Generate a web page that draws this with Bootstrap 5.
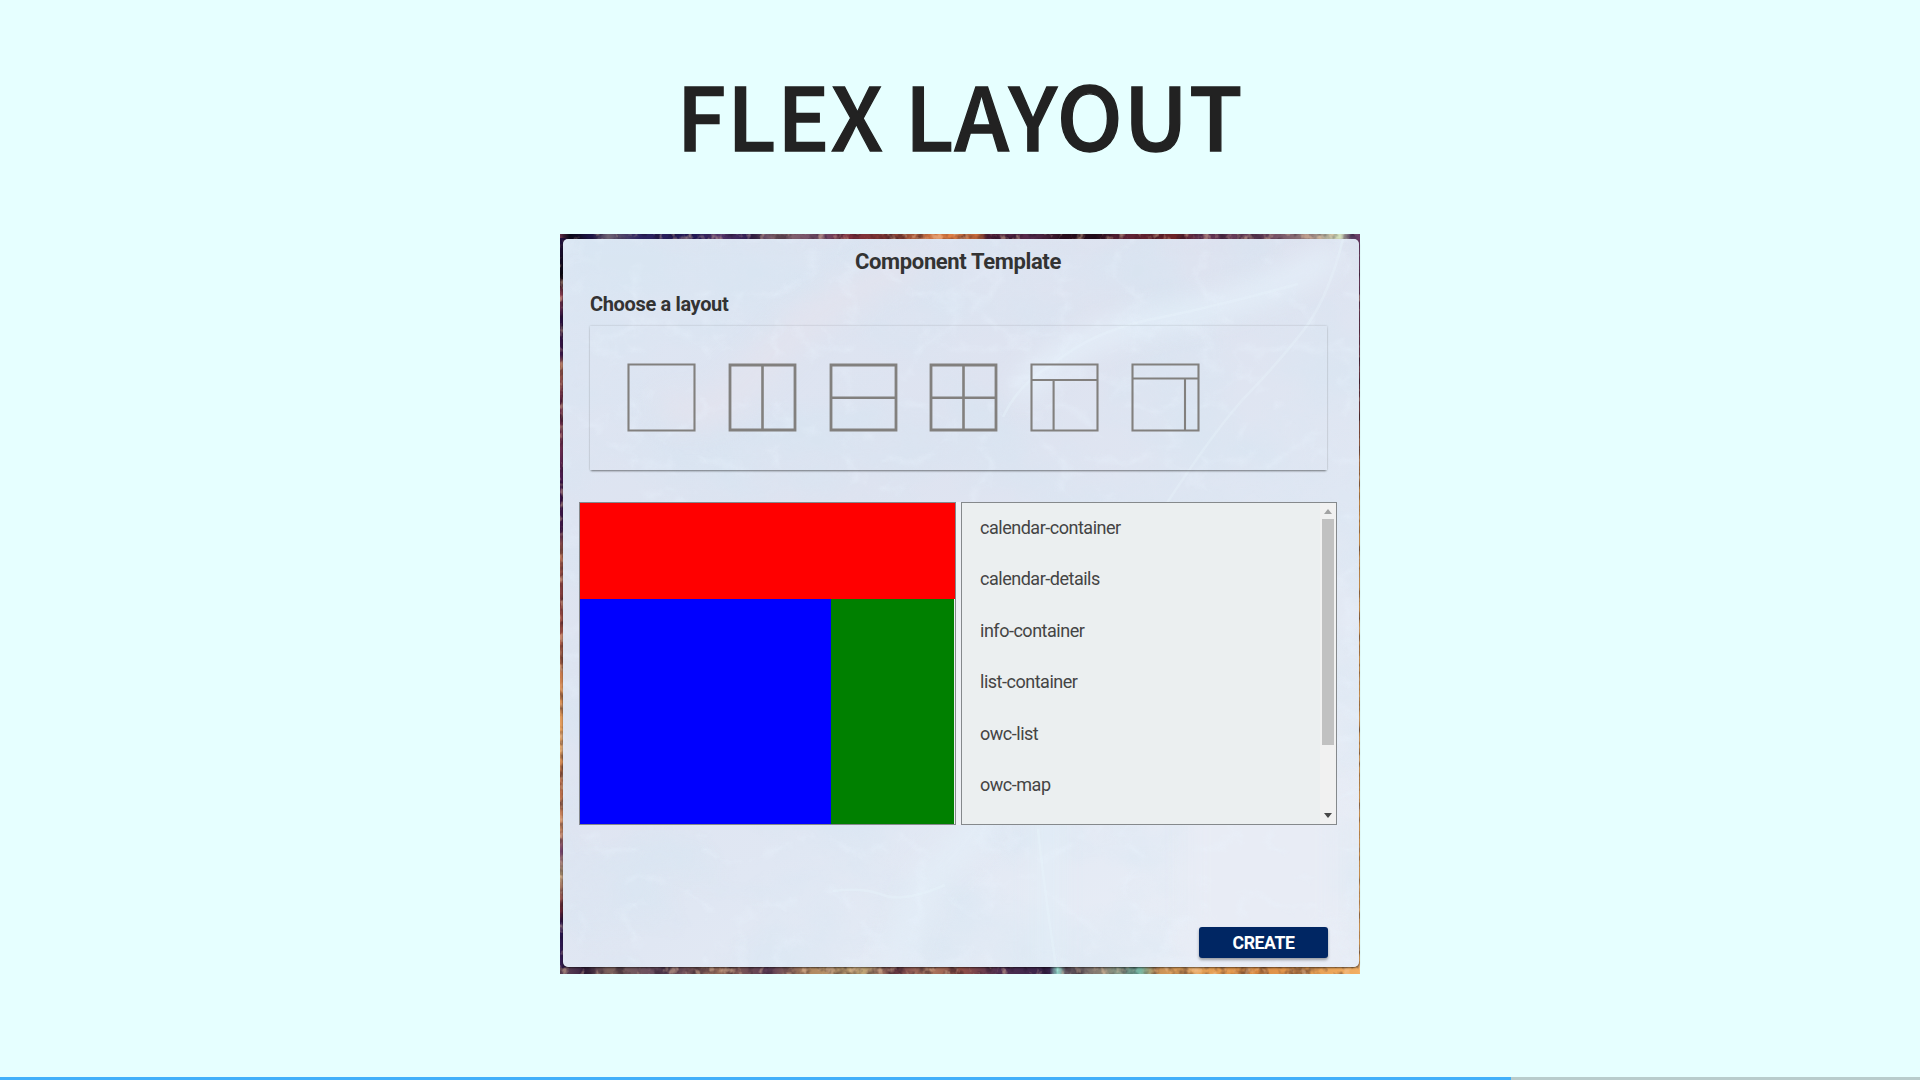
<!DOCTYPE html>
<html lang="en">
<head>
<meta charset="utf-8">
<meta name="viewport" content="width=device-width, initial-scale=1">
<title>Flex layout</title>
<link href="https://cdn.jsdelivr.net/npm/bootstrap@5.3.0/dist/css/bootstrap.min.css" rel="stylesheet">
<style>
  body { background: #e6ffff; height: 1080px; overflow: hidden; font-family: Roboto, "Liberation Sans", sans-serif; color: #333; }
  .slide-title { font-family: "Noto Sans CJK SC", "Noto Sans", sans-serif; font-weight: 500; font-size: 87.5px; line-height: 106px; letter-spacing: 1.1px; -webkit-text-stroke: 1.3px #222; color: #222; margin-top: 60px; height: 174px; }
  .shot { width: 800px; height: 740px; padding: 5px 1px 7px 3px; }
  .satellite { inset: 0; z-index: 0; }
  .dialog-panel { z-index: 1; border-radius: 5px; box-shadow: 0 1px 2px rgba(0,0,0,.55); overflow: hidden; }
  .haze { inset: 0; z-index: -1; }
  .dialog-title { font-size: 22px; font-weight: 700; line-height: 28px; letter-spacing: -.36px; padding-top: 9px; padding-right: 6px; }
  .dialog-sub { font-size: 20px; font-weight: 700; line-height: 26px; letter-spacing: -.35px; margin: 15px 0 0 27px; }
  .picker { width: 737px; height: 144px; margin: 9px 0 0 27px; padding: 37px 0 0 37px; gap: 31.8px; box-shadow: 0 2px 2px -1px rgba(0,0,0,.45), 0 0 2px rgba(0,0,0,.2); }
  .picker svg { width: 69px; height: 69px; flex: none; fill: none; stroke: #82807e; stroke-width: 2.1; }
  .workspace { margin: 32px 21px 0 16px; height: 323px; }
  .pane { border: 1px solid #85898c; background: #ebeff0; width: 377px; }
  .pane-list { width: 376px; }
  .gutter { background: #eef0f5; width: 382px; }
  .zone-top { background: red; height: 96px; }
  .zone-main { background: blue; width: 251px; }
  .zone-side { background: green; width: 123px; }
  .names { padding: 0 0 0 18px; font-size: 18px; letter-spacing: -.48px; color: #444; }
  .names li { height: 51.4px; line-height: 49.4px; }
  .scroller { width: 16px; background: #f1f1f1; padding: 6px 2px 6px 2px; }
  .scroller .thumb { height: 226px; background: #c1c1c1; margin-top: 5px; }
  .scroller svg { width: 8px; height: 5px; }
  .btn-create { width: 129px; height: 31px; margin: 102px 31px 0 auto; background: #002663; color: #fff; font-weight: 700; font-size: 17.6px; letter-spacing: -.4px; line-height: 32px; border-radius: 3px; padding: 0; border: 0; box-shadow: 0 2px 3px rgba(0,0,0,.35); }
  .deck-progress { height: 3px; border-radius: 0; background: #b8cccc; }
  .deck-progress .progress-bar { background: #42affa; }
</style>
<script src="https://cdn.jsdelivr.net/npm/bootstrap@5.3.0/dist/js/bootstrap.bundle.min.js"></script>
</head>
<body class="d-flex flex-column align-items-center">
<h1 class="slide-title mb-0 text-center">FLEX LAYOUT</h1>

<main class="shot position-relative d-flex">
  <!-- satellite photograph behind the dialog -->
  <svg class="satellite position-absolute" width="800" height="740" viewBox="0 0 800 740" aria-hidden="true">
    <defs>
      <linearGradient id="topEdge">
        <stop offset="0" stop-color="#7a3a55"/><stop offset=".012" stop-color="#080818"/><stop offset=".04" stop-color="#1e1548"/><stop offset=".06" stop-color="#6d6172"/><stop offset=".1" stop-color="#2c2360"/><stop offset=".17" stop-color="#211955"/><stop offset=".2" stop-color="#52346a"/><stop offset=".235" stop-color="#321f54"/><stop offset=".27" stop-color="#8a6b70"/><stop offset=".33" stop-color="#6e4868"/><stop offset=".36" stop-color="#7b2d3c"/><stop offset=".41" stop-color="#863a33"/><stop offset=".44" stop-color="#a35639"/><stop offset=".48" stop-color="#e38245"/><stop offset=".525" stop-color="#c76a3c"/><stop offset=".535" stop-color="#54203a"/><stop offset=".59" stop-color="#552b4d"/><stop offset=".63" stop-color="#2a0d1c"/><stop offset=".67" stop-color="#210b19"/><stop offset=".7" stop-color="#5c2338"/><stop offset=".77" stop-color="#6c2326"/><stop offset=".8" stop-color="#5e3050"/><stop offset=".88" stop-color="#6c4560"/><stop offset=".94" stop-color="#96807d"/><stop offset=".975" stop-color="#d5e3be"/><stop offset=".99" stop-color="#6a4a75"/><stop offset="1" stop-color="#70406a"/>
      </linearGradient>
      <linearGradient id="bottomEdge">
        <stop offset="0" stop-color="#644759"/><stop offset=".03" stop-color="#3b2443"/><stop offset=".06" stop-color="#7d625c"/><stop offset=".13" stop-color="#664a60"/><stop offset=".2" stop-color="#8f6756"/><stop offset=".26" stop-color="#5b3b55"/><stop offset=".31" stop-color="#b08760"/><stop offset=".38" stop-color="#bfa475"/><stop offset=".42" stop-color="#77424a"/><stop offset=".46" stop-color="#ad7a61"/><stop offset=".5" stop-color="#945248"/><stop offset=".55" stop-color="#4f2e51"/><stop offset=".612" stop-color="#372349"/><stop offset=".622" stop-color="#9feadb"/><stop offset=".632" stop-color="#675a65"/><stop offset=".68" stop-color="#8d8374"/><stop offset=".725" stop-color="#73b7a4"/><stop offset=".745" stop-color="#c69057"/><stop offset=".79" stop-color="#e8a65b"/><stop offset=".87" stop-color="#dc8d44"/><stop offset=".94" stop-color="#e7a055"/><stop offset="1" stop-color="#f2ae62"/>
      </linearGradient>
      <linearGradient id="leftEdge" x2="0" y2="1">
        <stop offset="0" stop-color="#221040"/><stop offset=".05" stop-color="#08060f"/><stop offset=".08" stop-color="#8b3e52"/><stop offset=".11" stop-color="#2a1140"/><stop offset=".16" stop-color="#3a1748"/><stop offset=".175" stop-color="#ad6950"/><stop offset=".22" stop-color="#5f2540"/><stop offset=".28" stop-color="#71304e"/><stop offset=".34" stop-color="#421651"/><stop offset=".4" stop-color="#3b1644"/><stop offset=".43" stop-color="#b56a50"/><stop offset=".48" stop-color="#843d3e"/><stop offset=".54" stop-color="#a35145"/><stop offset=".62" stop-color="#d98d53"/><stop offset=".7" stop-color="#efab66"/><stop offset=".74" stop-color="#b1603e"/><stop offset=".81" stop-color="#d08f68"/><stop offset=".84" stop-color="#70406a"/><stop offset=".87" stop-color="#bca27c"/><stop offset=".92" stop-color="#7d2d3a"/><stop offset=".94" stop-color="#261350"/><stop offset="1" stop-color="#382054"/>
      </linearGradient>
      <linearGradient id="rightEdge" x2="0" y2="1">
        <stop offset="0" stop-color="#6f406a"/><stop offset=".22" stop-color="#6c3440"/><stop offset=".35" stop-color="#dc9b52"/><stop offset="1" stop-color="#e7a75e"/>
      </linearGradient>
      <filter id="grain" x="0" y="0" width="100%" height="100%" color-interpolation-filters="sRGB">
        <feTurbulence type="fractalNoise" baseFrequency=".09 .09" numOctaves="3" seed="8"/>
        <feColorMatrix values="0 0 0 0 .08  0 0 0 0 .03  0 0 0 0 .1  3.4 0 0 0 -1.5"/>
      </filter>
      <filter id="sparks" x="0" y="0" width="100%" height="100%" color-interpolation-filters="sRGB">
        <feTurbulence type="fractalNoise" baseFrequency=".12 .1" numOctaves="3" seed="31"/>
        <feColorMatrix values="0 0 0 0 .96  0 0 0 0 .8  0 0 0 0 .66  0 4 0 0 -2.1"/>
      </filter>
      <filter id="veins" x="0" y="0" width="100%" height="100%" color-interpolation-filters="sRGB">
        <feTurbulence type="turbulence" baseFrequency=".014 .018" numOctaves="5" seed="23"/>
        <feColorMatrix values="0 0 0 0 .92  0 0 0 0 .96  0 0 0 0 1  -3.2 0 0 0 .75"/>
      </filter>
      <filter id="patches" x="0" y="0" width="100%" height="100%" color-interpolation-filters="sRGB">
        <feTurbulence type="fractalNoise" baseFrequency=".009 .012" numOctaves="5" seed="5"/>
        <feColorMatrix values="0 0 0 0 .83  0 0 0 0 .9  0 0 0 0 .95  2.4 0 0 0 -.9"/>
      </filter>
      <filter id="soft" x="-20%" y="-20%" width="140%" height="140%" color-interpolation-filters="sRGB"><feGaussianBlur stdDeviation="13"/></filter>
    </defs>
    <rect width="800" height="740" fill="#50304e"/>
    <rect width="800" height="8" fill="url(#topEdge)"/>
    <rect y="726" width="800" height="14" fill="url(#bottomEdge)"/>
    <rect y="4" width="6" height="730" fill="url(#leftEdge)"/>
    <rect x="797" y="4" width="3" height="730" fill="url(#rightEdge)"/>
    <rect width="800" height="740" filter="url(#grain)" opacity=".4"/>
    <rect width="800" height="740" filter="url(#sparks)" opacity=".45"/>
  </svg>

  <section class="dialog-panel position-relative d-flex flex-column flex-grow-1">
    <svg class="haze position-absolute" width="796" height="728" viewBox="0 0 796 728" aria-hidden="true">
      <defs>
        <linearGradient id="panelTone" x1="0" y1="0" x2=".7" y2="1">
          <stop offset="0" stop-color="#dde6f3"/><stop offset=".4" stop-color="#dee3f0"/><stop offset=".7" stop-color="#e0e7f3"/><stop offset="1" stop-color="#e8edf6"/>
        </linearGradient>
      </defs>
      <rect width="796" height="728" fill="url(#panelTone)"/>
      <rect width="796" height="728" filter="url(#patches)" opacity=".4"/>
      <g filter="url(#soft)" fill="none" stroke-linecap="round">
        <path d="M345 25Q240 75 195 130T110 170" stroke="#e2e3ee" stroke-width="30"/>
        <path d="M765 20Q700 60 600 80T460 150" stroke="#e5f0fa" stroke-width="20"/>
        <path d="M450 500Q430 590 365 640L330 728" stroke="#e3edf7" stroke-width="26"/>
        <path d="M485 470V728" stroke="#e2eef7" stroke-width="18"/>
        <path d="M700 580V680" stroke="#e8ecf5" stroke-width="150"/>
      </g>
      <rect width="796" height="728" filter="url(#veins)" opacity=".4"/>
      <g fill="none" stroke="#e9f5fc" stroke-width="2.5" opacity=".35">
        <path d="M780 0Q765 60 740 92T685 155T600 270"/>
        <path d="M735 45Q650 68 590 80T490 125Q455 145 440 178"/>
        <path d="M475 590Q480 640 493 728"/>
        <path d="M270 652Q300 648 320 656T382 646"/>
      </g>
    </svg>

    <h2 class="dialog-title mb-0 text-center">Component Template</h2>
    <h3 class="dialog-sub mb-0">Choose a layout</h3>

    <div class="picker d-flex">
      <svg viewBox="0 0 69 69"><path d="M1.5 1.5h66v66h-66z"/></svg>
      <svg viewBox="0 0 69 69"><path d="M2 2h65v65H2z" stroke-width="2.8"/><path d="M34.5 2v65" stroke-width="2.6"/></svg>
      <svg viewBox="0 0 69 69"><path d="M2 2h65v65H2z" stroke-width="2.8"/><path d="M2 34.7h65" stroke-width="2.6"/></svg>
      <svg viewBox="0 0 69 69"><path d="M2 2h65v65H2z" stroke-width="2.8"/><path d="M34.5 2v65M2 34.7h65" stroke-width="2.6"/></svg>
      <svg viewBox="0 0 69 69"><path d="M1.5 1.5h66v66h-66zM2 17h65M23.6 17v50"/></svg>
      <svg viewBox="0 0 69 69"><path d="M1.5 1.5h66v66h-66zM2 15.5h65M54 15.5v52"/></svg>
    </div>

    <div class="workspace d-flex">
      <div class="gutter flex-shrink-0">
        <div class="pane h-100 d-flex flex-column">
          <div class="zone-top flex-shrink-0"></div>
          <div class="d-flex flex-grow-1"><div class="zone-main"></div><div class="zone-side"></div></div>
        </div>
      </div>
      <div class="pane pane-list flex-shrink-0 d-flex">
        <ul class="names list-unstyled mb-0 flex-grow-1">
          <li>calendar-container</li>
          <li>calendar-details</li>
          <li>info-container</li>
          <li>list-container</li>
          <li>owc-list</li>
          <li>owc-map</li>
        </ul>
        <div class="scroller d-flex flex-column">
          <svg class="mx-auto" viewBox="0 0 8 5"><path d="M0 5L4 0l4 5z" fill="#a3a3a3"/></svg>
          <div class="thumb"></div>
          <svg class="mx-auto mt-auto" viewBox="0 0 8 5"><path d="M0 0l4 5 4-5z" fill="#484848"/></svg>
        </div>
      </div>
    </div>

    <button class="btn-create btn" type="button">CREATE</button>
  </section>
</main>

<div class="deck-progress progress w-100 mt-auto">
  <div class="progress-bar" style="width: 78.7%"></div>
</div>
</body>
</html>
